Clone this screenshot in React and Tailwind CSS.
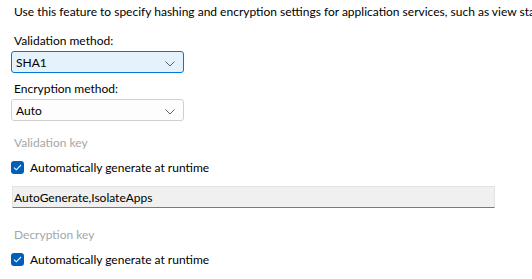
import React from "react";

const Chevron = () => (
  <svg width="10" height="6" viewBox="0 0 10 6" className="absolute right-[8px] top-[9px]">
    <path d="M0.5 0.5 L5 5 L9.5 0.5" fill="none" stroke="#606060" strokeWidth="1" />
  </svg>
);

const Combo = ({ value, focused }) => (
  <div
    className={`relative ml-[11px] w-[173px] h-[22px] border rounded-[3px] flex items-center pl-[4px] ${
      focused ? "border-[#0078d4] bg-[#e5f1fb]" : "border-[#d0d0d0] bg-[#fdfdfd]"
    }`}
  >
    <span>{value}</span>
    <Chevron />
  </div>
);

const Check = ({ label }) => (
  <div className="flex items-center ml-[11px] h-[13px]">
    <div className="w-[13px] h-[13px] rounded-[3px] bg-[#005fb8] flex items-center justify-center">
      <svg width="9" height="7" viewBox="0 0 9 7">
        <path d="M1 3.6 L3.3 5.8 L8 1" fill="none" stroke="white" strokeWidth="1.1" />
      </svg>
    </div>
    <span className="ml-[6px]">{label}</span>
  </div>
);

export default function App() {
  return (
    <div className="w-[532px] h-[279px] bg-white overflow-hidden whitespace-nowrap text-[12px] leading-[15px] text-black font-['Lato',sans-serif]">
      <p className="pt-[4px] pl-[14px]">
        Use this feature to specify hashing and encryption settings for application services, such as view state and forms authentication.
      </p>
      <p className="mt-[14px] pl-[14px]">Validation method:</p>
      <div className="mt-[3px]">
        <Combo value="SHA1" focused />
      </div>
      <p className="mt-[8px] pl-[14px]">Encryption method:</p>
      <div className="mt-[3px]">
        <Combo value="Auto" />
      </div>
      <p className="mt-[14px] pl-[14px] text-[#a6a6a6]">Validation key</p>
      <div className="mt-[11px]">
        <Check label="Automatically generate at runtime" />
      </div>
      <div className="mt-[12px] ml-[12px] w-[483px] h-[22px] bg-[#f0f0f0] border border-[#e3e3e3] border-b-[#7a7a7a] flex items-center pl-[1px]">
        AutoGenerate,IsolateApps
      </div>
      <p className="mt-[19px] pl-[14px] text-[#a6a6a6]">Decryption key</p>
      <div className="mt-[11px]">
        <Check label="Automatically generate at runtime" />
      </div>
    </div>
  );
}
